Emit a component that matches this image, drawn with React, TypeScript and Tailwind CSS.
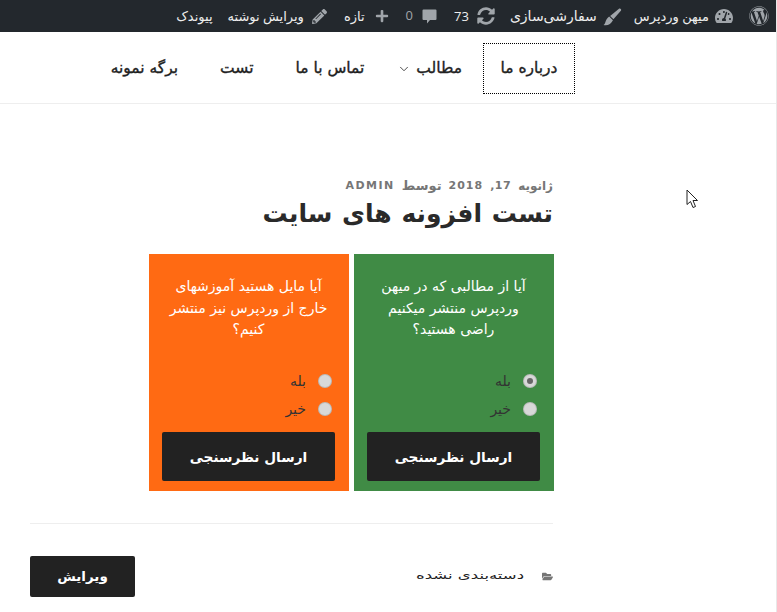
import { ChevronDown } from "lucide-react";
import { FaFolderOpen, FaPencilAlt, FaPlus, FaSyncAlt, FaTachometerAlt, FaWordpress } from "react-icons/fa";

const font = "font-['DejaVu_Sans','Noto_Sans',sans-serif]";

function BarText({ children }: { children: React.ReactNode }) {
  return <span className="text-[13px] leading-[32px] text-[#eeeeee]">{children}</span>;
}

function BrushIcon() {
  return (
    <svg className="ml-[6px] size-[19px] text-[#a0a5aa]" viewBox="0 0 20 20" fill="currentColor">
      <path d="M0.5 19 C3 18 2 13 6.5 10 L10.5 14 C8.5 18 5 20 0.5 19 Z" />
      <path d="M7.5 9.5 L16.5 2 C18 0.8 20 2.6 18.8 4 L11 13 Z" />
    </svg>
  );
}

function CommentIcon() {
  return (
    <svg className="ml-[9px] size-[15px] text-[#a0a5aa]" viewBox="0 0 15 15" fill="currentColor">
      <path d="M1.5 0.5 H13.5 Q14.5 0.5 14.5 1.5 V10 Q14.5 11 13.5 11 H8 L5 14.5 V11 H1.5 Q0.5 11 0.5 10 V1.5 Q0.5 0.5 1.5 0.5 Z" />
    </svg>
  );
}

function AdminBar() {
  return (
    <div className="flex h-8 items-center bg-[#23282d] pr-[7px] font-['Open_Sans','DejaVu_Sans',sans-serif]">
      <FaWordpress className="ml-4 size-5 text-[#a0a5aa]" />
      <FaTachometerAlt className="ml-[6px] size-[18px] text-[#a0a5aa]" />
      <div className="ml-[12px]"><BarText>میهن وردپرس</BarText></div>
      <BrushIcon />
      <div className="ml-[15px] text-[14px] leading-[32px] text-[#eeeeee]">سفارشی‌سازی</div>
      <FaSyncAlt className="ml-2 size-[18px] text-[#a0a5aa]" />
      <div className="ml-[17px]"><BarText>73</BarText></div>
      <CommentIcon />
      <div className="ml-[17px] text-[13px] text-[#a0a5aa]">0</div>
      <FaPlus className="ml-[10px] size-[14px] text-[#a0a5aa]" />
      <div className="ml-[17px]"><BarText>تازه</BarText></div>
      <FaPencilAlt className="ml-2 size-[15px] text-[#a0a5aa]" />
      <div className="ml-[15px]"><BarText>ویرایش نوشته</BarText></div>
      <BarText>پیوندک</BarText>
    </div>
  );
}

function Nav() {
  const items = ["تماس با ما", "تست", "برگه نمونه"];
  return (
    <nav className={`flex h-[72px] items-center border-b border-[#eeeeee] pt-[2px] pr-[201px] text-[15.5px] font-normal text-[#222222] [-webkit-text-stroke:0.35px_#222222] ${font}`}>
      <a className="flex h-[51px] w-[92px] items-center justify-center border border-dotted border-black">درباره ما</a>
      <a className="flex h-[51px] items-center gap-[5px] pl-[12px] pr-[21px]">
        مطالب
        <ChevronDown className="size-[14px] text-[#333333]" strokeWidth={1.5} />
      </a>
      {items.map((item) => (
        <a key={item} className="flex h-[51px] items-center px-[21px]">{item}</a>
      ))}
    </nav>
  );
}

function Poll({ color, lines, checked }: { color: string; lines: string[]; checked?: boolean }) {
  return (
    <div className={`flex h-[237px] w-[200px] flex-col pt-[22px] pr-[14px] pb-[10px] pl-[13px] ${color}`}>
      <p className="text-center text-[14px] leading-[21.5px] text-white">
        {lines.map((line) => (
          <span key={line} className="block">{line}</span>
        ))}
      </p>
      <div className="mt-auto flex flex-col gap-[8px] pr-[4px] text-[14px] text-[#333333]">
        <label className="flex h-[20px] items-center gap-[13px]">
          <span className={`size-[12px] rounded-full ring-1 ring-[#bbbbbb] ${checked ? "border-[3px] border-[#d8d8d8] bg-[#666666]" : "bg-[#d8d8d8]"}`} />
          بله
        </label>
        <label className="flex h-[20px] items-center gap-[13px]">
          <span className="size-[12px] rounded-full bg-[#d8d8d8] ring-1 ring-[#bbbbbb]" />
          خیر
        </label>
      </div>
      <button className="mt-[13px] h-[49px] w-full rounded-[2px] bg-[#222222] pt-px text-[13.7px] font-bold text-white">ارسال نظرسنجی</button>
    </div>
  );
}

function Cursor() {
  return (
    <svg className="absolute left-[686px] top-[189px]" width="13" height="21" viewBox="0 0 13 21">
      <path d="M1 1 L1 15.5 L4.5 12.5 L7 18.5 L9.5 17.5 L7 11.5 L11.5 11.5 Z" fill="#ffffff" stroke="#222222" strokeWidth="1" />
    </svg>
  );
}

export default function App() {
  return (
    <div dir="rtl" className={`relative h-[612px] overflow-hidden border-r border-[#e8e8e8] bg-white ${font}`}>
      <AdminBar />
      <Nav />
      <main className="mr-[223px] w-[523px] pt-[74px]">
        <p className="flex h-[16px] items-center gap-[7px] text-[11px] font-bold text-[#767676]">
          <span className="text-[12px]">ژانویه</span>
          <span className="tracking-[0.5px]">17,</span>
          <span className="tracking-[1px]">2018</span>
          <span className="text-[13px]">توسط</span>
          <span className="tracking-[1.5px]">ADMIN</span>
        </p>
        <h1 className="mt-[2px] text-[25px] font-bold leading-[36px] text-[#2a2a2a] [word-spacing:1px]">تست افزونه های سایت</h1>
        <div className="-mr-px mt-[22px] flex gap-[5px]">
          <Poll color="bg-[#408b45]" checked lines={["آیا از مطالبی که در میهن", "وردپرس منتشر میکنیم", "راضی هستید؟"]} />
          <Poll color="bg-[#ff6a13]" lines={["آیا مایل هستید آموزشهای", "خارج از وردپرس نیز منتشر", "کنیم؟"]} />
        </div>
        <hr className="mt-[32px] border-[#eeeeee]" />
        <div className="mt-[32px] flex items-center justify-between">
          <div className="flex items-center gap-[18px] text-[11px] text-[#222222]">
            <FaFolderOpen className="size-[11px] text-[#767676]" />
            <span className="inline-block origin-right scale-x-[1.5]">دسته‌بندی نشده</span>
          </div>
          <button className="h-[41px] w-[105px] rounded-[2px] bg-[#222222] text-[13.5px] font-bold text-white">ویرایش</button>
        </div>
      </main>
      <Cursor />
    </div>
  );
}
